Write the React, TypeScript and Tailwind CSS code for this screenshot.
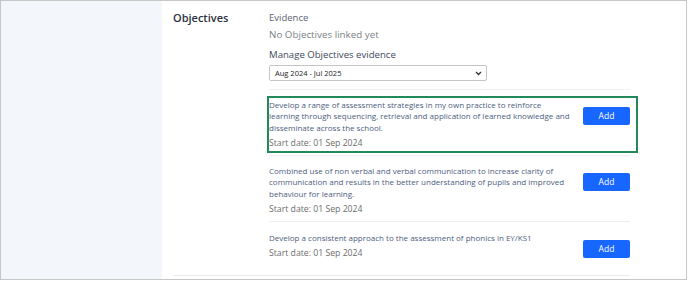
import React from "react";

type Item = { lines: string[]; h: string; extra?: string };

const items: Item[] = [
  {
    lines: [
      "Develop a range of assessment strategies in my own practice to reinforce",
      "learning through sequencing, retrieval and application of learned knowledge and",
      "disseminate across the school.",
    ],
    h: "h-[66px]",
    extra: "pt-[3px]",
  },
  {
    lines: [
      "Combined use of non verbal and verbal communication to increase clarity of",
      "communication and results in the better understanding of pupils and improved",
      "behaviour for learning.",
    ],
    h: "h-[66px]",
    extra: "pt-[3px]",
  },
  {
    lines: ["Develop a consistent approach to the assessment of phonics in EY/KS1"],
    h: "h-[53px]",
    extra: "pb-[6px]",
  },
];

export default function App() {
  return (
    <div className="w-[688px] h-[281px] bg-white font-['Open_Sans',sans-serif]">
      <div className="flex w-[687px] h-[280px] border border-[#c6c6c6] overflow-hidden">
        <div className="w-[161px] shrink-0 bg-[#f3f7fb]" />
        <div className="flex-1 pl-[11px] pt-[9px]">
          <div className="flex w-[457px] border-b border-[#ececec]">
            <div className="w-[96px] shrink-0 text-[11px] leading-[16px] font-semibold text-[#2d3340]">
              Objectives
            </div>
            <div className="w-[361px]">
              <div className="text-[9.5px] leading-[16px] text-[#5b6370]">Evidence</div>
              <div className="text-[9.8px] leading-[13px] mt-[2px] text-[#7a7f87]">
                No Objectives linked yet
              </div>
              <div className="text-[9.6px] leading-[14px] mt-[7px] font-medium text-[#3d4a5c]">
                Manage Objectives evidence
              </div>
              <div className="mt-[3px] w-[218px] h-[16px] border border-[#c4c4c4] rounded-[2px] flex items-center justify-between pl-[5px] pr-[4px]">
                <span className="text-[7.5px] leading-[10px] text-[#222]">Aug 2024 - Jul 2025</span>
                <svg width="7" height="5" viewBox="0 0 7 5">
                  <path d="M1 1l2.5 2.5L6 1" fill="none" stroke="#333" strokeWidth="1.3" />
                </svg>
              </div>
              <div className="mt-[8px] border-b border-[#f0f0f0]" />
              {items.map((it, i) => (
                <div
                  key={i}
                  className={`relative flex items-center ${it.h} ${i < 2 ? "border-b border-[#eeeeee]" : ""}`}
                >
                  {i === 0 && (
                    <div className="absolute left-[-2px] top-[6px] w-[371px] h-[57px] border-2 border-[#23895b] pointer-events-none" />
                  )}
                  <div className={`flex w-full items-start justify-between ${it.extra ?? ""}`}>
                    <div>
                      <div className="text-[8px] leading-[11.5px] text-[#4d5d80]">
                        {it.lines.map((l, j) => (
                          <React.Fragment key={j}>
                            {l}
                            {j < it.lines.length - 1 && <br />}
                          </React.Fragment>
                        ))}
                      </div>
                      <div className="text-[8.7px] leading-[13px] mt-[3.5px] text-[#6b6b6b]">
                        Start date: 01 Sep 2024
                      </div>
                    </div>
                    <button className="mt-[8px] w-[47px] h-[18px] rounded-[2px] bg-[#1766ff] text-white text-[8.5px] leading-[18px] shrink-0">
                      Add
                    </button>
                  </div>
                </div>
              ))}
            </div>
          </div>
        </div>
      </div>
    </div>
  );
}
